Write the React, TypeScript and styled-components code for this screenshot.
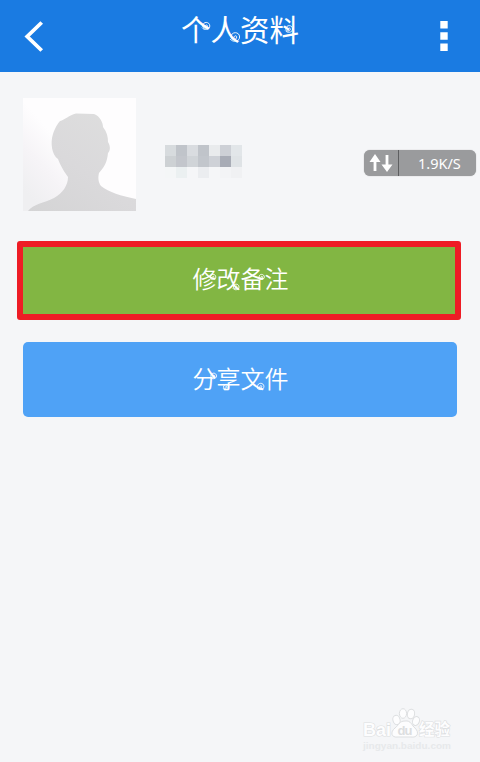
import React from "react";
import styled, { createGlobalStyle } from "styled-components";

const GlobalStyle = createGlobalStyle`
  * { box-sizing: border-box; }
  body { margin: 0; background: #f5f6f8; }
`;

const Screen = styled.main`
  position: relative;
  display: flex;
  flex-direction: column;
  width: 480px;
  height: 762px;
  overflow: hidden;
  background: #f5f6f8;
  font-family: "Noto Sans CJK SC", sans-serif;
`;

const Header = styled.header`
  display: grid;
  grid-template-columns: 72px 1fr 72px;
  height: 72px;
  flex: none;
  background: #1a7be2;
  color: #fff;
`;

const IconButton = styled.button`
  display: flex;
  align-items: center;
  justify-content: center;
  padding: 0;
  border: 0;
  background: none;
  color: #fff;
`;

const Title = styled.h1`
  display: flex;
  justify-content: center;
  margin: 0;
  padding-top: 8px;
  line-height: 40px;
  font-size: 29.5px;
  font-weight: 400;
`;

const Lettering = styled.span`
  position: relative;
  display: inline-block;
  white-space: nowrap;
`;

const Curls = styled.svg`
  position: absolute;
  left: 0;
  top: 0;
  width: 100%;
  height: 100%;
  overflow: visible;
  fill: none;
  stroke: #fff;
  stroke-width: 0.9;
  stroke-linecap: round;
`;

const Profile = styled.section`
  position: relative;
  display: flex;
  align-items: flex-start;
  gap: 29px;
  height: 169px;
  padding: 26px 23px 0;
  flex: none;
`;

const Avatar = styled.svg`
  width: 113px;
  height: 113px;
  flex: none;
`;

const Mosaic = styled.div`
  display: grid;
  grid-template-columns: repeat(7, 11px);
  grid-auto-rows: 11px;
  margin-top: 47px;
`;

const Cell = styled.span<{ $tone: string }>`
  background: ${(p) => p.$tone};
`;

const SpeedBadge = styled.div`
  position: absolute;
  right: 4px;
  top: 78px;
  display: flex;
  width: 112px;
  height: 26px;
  border-radius: 6px;
  background: #9a9b9d;
  color: #fff;
  box-shadow: 0 0 1px #9a9b9d;
`;

const Arrows = styled.svg`
  width: 35px;
  height: 26px;
  border-right: 1px solid #5e5f61;
`;

const Speed = styled.span`
  flex: 1;
  padding-left: 19px;
  font: 400 14.5px/27px "Noto Sans", sans-serif;
  white-space: nowrap;
`;

const Actions = styled.section`
  display: flex;
  flex-direction: column;
  align-items: flex-start;
  gap: 22px;
`;

const Action = styled.button<{ $marked?: boolean }>`
  width: ${(p) => (p.$marked ? 444 : 434)}px;
  height: ${(p) => (p.$marked ? 79 : 75)}px;
  margin-left: ${(p) => (p.$marked ? 17 : 23)}px;
  padding: ${(p) => (p.$marked ? "0 0 5px 3px" : "0 0 3px 1px")};
  border: ${(p) => (p.$marked ? "6px solid #ee1c25" : "0")};
  border-radius: ${(p) => (p.$marked ? 3 : 5)}px;
  background: ${(p) => (p.$marked ? "#82b643" : "#4fa2f6")};
  color: #fff;
  font: 350 24px/36px "Noto Sans CJK SC", sans-serif;
`;

const Watermark = styled.div`
  position: absolute;
  left: 362px;
  top: 707px;
  width: 92px;
  height: 46px;
`;

const WatermarkArt = styled.svg`
  display: block;
  overflow: visible;
`;

const mosaicTones = [
  "#d7dbde", "#c0c4ca", "#d9dce0", "#c0c4ca", "#e9ebed", "#cdd0d6", "#e2e6e9",
  "#cdd1d4", "#c3c6cc", "#d0d4d8", "#c2c6cc", "#ced1d7", "#a8acb6", "#dfe3e6",
  "#f4f6f7", "#ebf0f1", "#f5f6f8", "#ebedf0", "#f5f6f8", "#f3f4f6", "#f0f1f3",
];

type Curl = { x: number; y: number; s: number };

const Curled = ({ text, curls }: { text: string; curls: Curl[] }) => (
  <Lettering>
    {text}
    <Curls aria-hidden="true">
      {curls.map(({ x, y, s }) => (
        <path
          key={x}
          vectorEffect="non-scaling-stroke"
          transform={`translate(${x} ${y}) scale(${s})`}
          d="M-4 2C-2 5 4 4 4 0C4-5-3.5-5-3.5 0C-3.5 3 1.5 3 1.5 0C1.5-1.5-.8-1.5-.8.2"
        />
      ))}
    </Curls>
  </Lettering>
);

export default function App() {
  return (
    <>
      <GlobalStyle />
      <Screen>
        <Header>
          <IconButton aria-label="返回">
            <svg width="72" height="72" viewBox="0 0 72 72" fill="none">
              <path d="M41.7 22.5 27.2 36.5 41.7 50.5" stroke="currentColor" strokeWidth="3.8" />
            </svg>
          </IconButton>
          <Title>
            <Curled
              text="个人资料"
              curls={[
                { x: 25, y: 18, s: 0.95 },
                { x: 54, y: 29, s: 1.15 },
                { x: 108, y: 21, s: 0.9 },
              ]}
            />
          </Title>
          <IconButton aria-label="更多">
            <svg width="72" height="72" viewBox="0 0 72 72" fill="currentColor">
              <path d="M32.3 21h7.4v7.5h-7.4zM32.3 32.3h7.4v7.4h-7.4zM32.3 43.5h7.4V51h-7.4z" />
            </svg>
          </IconButton>
        </Header>

        <Profile>
          <Avatar viewBox="0 0 113 113">
            <defs>
              <linearGradient id="backdrop" x1="0" y1=".8" x2=".55" y2=".3">
                <stop offset="0" stopColor="#efeff1" />
                <stop offset=".35" stopColor="#f6f4f7" />
                <stop offset=".7" stopColor="#fefdfe" />
              </linearGradient>
              <linearGradient id="figure" x1="0" y1="1" x2=".8" y2="0">
                <stop offset="0" stopColor="#d4d4d5" />
                <stop offset=".5" stopColor="#dad9db" />
                <stop offset="1" stopColor="#dedede" />
              </linearGradient>
            </defs>
            <path fill="url(#backdrop)" d="M0 0h113v113H0z" />
            <path
              fill="url(#figure)"
              d="M5 113C10 106 21 105 31 100C40 95 45 87 45 79C42 75 37 67 35 61C29 57 27 45 30 36C32 30 35 25 37 23C42 22 46 17 53 15.5L71 16C77 18 80 25 80 29C84 34 85 39 85 44C88 49 87 53 85 55C84 65 81 69 76 75C75 79 75 84 78 88C86 94 98 98 113 101V113Z"
            />
          </Avatar>
          <Mosaic>
            {mosaicTones.map((tone, i) => (
              <Cell key={i} $tone={tone} />
            ))}
          </Mosaic>
          <SpeedBadge>
            <Arrows viewBox="0 0 34 26" fill="none" stroke="currentColor" strokeWidth="2.8">
              <path d="M11 21V8M23 5v13" />
              <path fill="currentColor" stroke="none" d="M5.5 12 11 4l5.5 8zM17.5 14.5 23 22l5.5-7.5z" />
            </Arrows>
            <Speed>1.9K/S</Speed>
          </SpeedBadge>
        </Profile>

        <Actions>
          <Action $marked>
            <Curled
              text="修改备注"
              curls={[
                { x: 20, y: 17, s: 0.7 },
                { x: 43, y: 27, s: 0.75 },
                { x: 68.5, y: 17, s: 0.7 },
              ]}
            />
          </Action>
          <Action>
            <Curled
              text="分享文件"
              curls={[
                { x: 20.5, y: 16, s: 0.75 },
                { x: 33, y: 27, s: 0.7 },
                { x: 67.5, y: 26.5, s: 0.85 },
              ]}
            />
          </Action>
        </Actions>

        <Watermark>
          <WatermarkArt width="92" height="46" viewBox="0 0 92 46">
            <g fill="#fdfdfe" stroke="#dddfe1" strokeWidth="1">
              <ellipse cx="34.5" cy="13" rx="3.6" ry="4.7" transform="rotate(-15 34.5 13)" />
              <ellipse cx="41" cy="6.5" rx="3.6" ry="4.8" />
              <ellipse cx="49" cy="7" rx="3.6" ry="4.8" transform="rotate(10 49 7)" />
              <ellipse cx="54" cy="14" rx="3.4" ry="4.5" transform="rotate(20 54 14)" />
              <path d="M43 14C49 13 50 19 53 21C58 26 55 31 49 30H36C29 31 28 25 33 21C37 18 37 14 43 14Z" />
            </g>
            <g
              fill="#fdfdfe"
              stroke="#dddfe1"
              strokeWidth="1.2"
              paintOrder="stroke"
              fontFamily="Liberation Sans, sans-serif"
            >
              <text x="1" y="28.5" fontSize="18" fontWeight="700" textLength="28" lengthAdjust="spacingAndGlyphs">Bai</text>
              <text x="35.5" y="27.5" fontSize="13" fontWeight="700" fill="#dcdee0" stroke="none" textLength="15">du</text>
              <text x="57" y="27.5" fontSize="15.5" fontWeight="700" fontFamily="Noto Sans CJK SC, sans-serif" textLength="31">经验</text>
              <text x="1" y="41.5" fontSize="9" fontWeight="700" fill="#e7e9eb" stroke="none" textLength="88" lengthAdjust="spacingAndGlyphs">jingyan.baidu.com</text>
            </g>
          </WatermarkArt>
        </Watermark>
      </Screen>
    </>
  );
}
